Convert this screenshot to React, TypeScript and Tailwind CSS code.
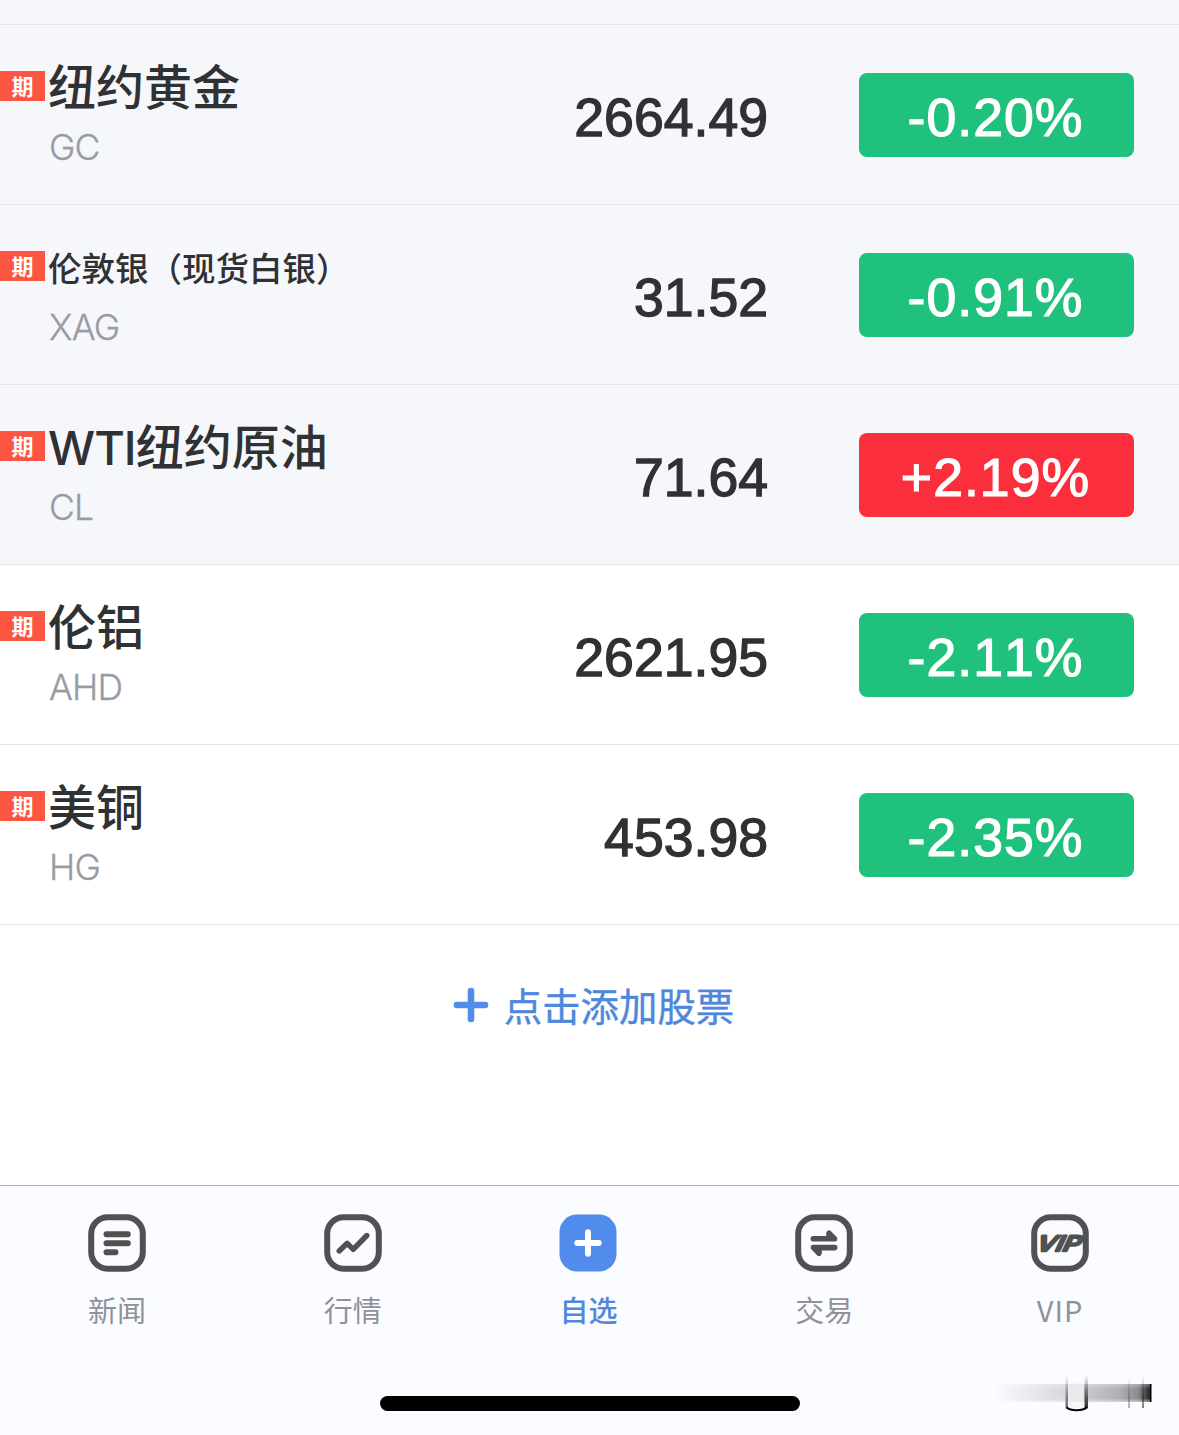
import type { ReactNode } from 'react';
import { clsx } from 'clsx';

type Quote = {
  name: string;
  prefix?: string;
  code: string;
  price: string;
  change: string;
  pinned?: boolean;
  compact?: boolean;
};

const quotes: Quote[] = [
  { name: '纽约黄金', code: 'GC', price: '2664.49', change: '-0.20%', pinned: true },
  { name: '伦敦银（现货白银）', code: 'XAG', price: '31.52', change: '-0.91%', pinned: true, compact: true },
  { prefix: 'WTI', name: '纽约原油', code: 'CL', price: '71.64', change: '+2.19%', pinned: true },
  { name: '伦铝', code: 'AHD', price: '2621.95', change: '-2.11%' },
  { name: '美铜', code: 'HG', price: '453.98', change: '-2.35%' },
];

function QuoteRow({ name, prefix, code, price, change, pinned, compact }: Quote) {
  const up = change.startsWith('+');
  return (
    <li className={clsx('flex h-[180px] border-b border-[#e3e5e9]', pinned ? 'bg-[#f5f7fb]' : 'bg-white')}>
      <span className="mt-[46px] flex h-[30px] w-[45px] items-center justify-center bg-[#fc5642] pt-0.5 text-[22px] leading-none font-bold text-white">
        期
      </span>
      <div className="ml-[3px] w-[400px] pt-[27px]">
        <div
          className={clsx(
            'flex h-[72px] items-center font-medium whitespace-nowrap text-[#303133]',
            compact ? 'pt-0.5 text-[33.5px]' : 'text-[48px]',
          )}
        >
          {prefix && <span className="text-[47px] tracking-[-1px]">{prefix}</span>}
          {name}
        </div>
        <div className="mt-0.5 ml-px text-[35.5px] leading-[44px] font-light tracking-[-0.8px] text-[#989ba5] [-webkit-text-stroke:0.3px_#989ba5]">
          {code}
        </div>
      </div>
      <div className="flex flex-1 items-center justify-end pt-[5px] pr-[91px] font-['Liberation_Sans',sans-serif] text-[53.6px] text-[#303133] [font-kerning:none] [-webkit-text-stroke:1.3px_#303133]">
        {price}
      </div>
      <div
        className={clsx(
          "mt-12 mr-[45px] flex h-[84px] w-[275px] items-center justify-center rounded-lg pt-1 pr-0.5 font-['Liberation_Sans',sans-serif] text-[53.6px] tracking-[1px] text-white [font-kerning:none] [-webkit-text-stroke:1.2px_white]",
          up ? 'bg-[#fb2f3b]' : 'bg-[#1fc17d]',
        )}
      >
        {change}
      </div>
    </li>
  );
}

/** Rounded frame shared by the inactive tab icons */
function TabIcon({ children }: { children: ReactNode }) {
  return (
    <svg
      viewBox="0 0 58 58"
      className="size-[58px] overflow-visible"
      fill="none"
      stroke="#505152"
      strokeLinecap="round"
      strokeLinejoin="round"
    >
      <rect x="3.2" y="3.2" width="51.6" height="51.6" rx="16.5" strokeWidth="6" />
      {children}
    </svg>
  );
}

const tabs = [
  {
    label: '新闻',
    icon: (
      <TabIcon>
        <path d="M18.5 20.3h21.3M18.5 29.3h21.3M18.5 38.3h9" strokeWidth="6" />
      </TabIcon>
    ),
  },
  {
    label: '行情',
    icon: (
      <TabIcon>
        <path d="M15.2 37l8-7.7 6 6L42.8 21.5" strokeWidth="5.4" />
      </TabIcon>
    ),
  },
  {
    label: '自选',
    active: true,
    icon: (
      <svg viewBox="0 0 58 58" className="size-[58px]">
        <rect x="0.5" y="0.5" width="57" height="57" rx="17.5" fill="#518bec" />
        <path d="M29 18.3v21.4M18.3 29h21.4" stroke="white" strokeWidth="6" strokeLinecap="round" />
      </svg>
    ),
  },
  {
    label: '交易',
    icon: (
      <TabIcon>
        <path d="M18.3 24.8h21.2L34 19.2v5.6M39.7 33.6H18.5l5.5 5.6v-5.6" strokeWidth="5.6" />
      </TabIcon>
    ),
  },
  {
    label: 'VIP',
    icon: (
      <TabIcon>
        <text
          x="4"
          y="37.5"
          textLength="44"
          lengthAdjust="spacingAndGlyphs"
          transform="translate(17 0) skewX(-25)"
          fill="#505152"
          strokeWidth="2.4"
          className="font-['Inter',sans-serif] text-[21px] font-medium"
        >
          VIP
        </text>
      </TabIcon>
    ),
  },
];

/** Smudged strip in the bottom corner */
function Smudge() {
  return (
    <svg viewBox="0 0 170 42" className="absolute top-[1373px] left-[985px] h-[42px] w-[170px]">
      <defs>
        <linearGradient id="strip">
          <stop offset="0" stopColor="#000" stopOpacity="0" />
          <stop offset="0.45" stopColor="#000" stopOpacity="0.14" />
          <stop offset="0.8" stopColor="#000" stopOpacity="0.3" />
          <stop offset="0.92" stopColor="#000" stopOpacity="0.45" />
          <stop offset="1" stopColor="#000" stopOpacity="0.9" />
        </linearGradient>
        <linearGradient id="post" x1="0" y1="0" x2="0" y2="1">
          <stop offset="0" stopColor="#000" stopOpacity="0" />
          <stop offset="0.6" stopColor="#000" stopOpacity="0.5" />
          <stop offset="1" stopColor="#000" stopOpacity="0.85" />
        </linearGradient>
        <linearGradient id="fade" x1="0" y1="0" x2="0" y2="1">
          <stop offset="0" stopColor="#fbfcff" stopOpacity="0.3" />
          <stop offset="0.3" stopColor="#fbfcff" stopOpacity="0" />
          <stop offset="0.8" stopColor="#fbfcff" stopOpacity="0" />
          <stop offset="1" stopColor="#fbfcff" stopOpacity="0.5" />
        </linearGradient>
      </defs>
      <rect x="8" y="11" width="158" height="18" fill="url(#strip)" />
      <rect x="8" y="11" width="158" height="18" fill="url(#fade)" />
      <rect x="83" y="9" width="16" height="26" fill="#f6f7f9" />
      <rect x="83" y="11" width="16" height="18" fill="#e9eaec" />
      <rect x="80.5" y="2" width="2.5" height="33" fill="url(#post)" opacity="0.7" />
      <rect x="99.5" y="2" width="3.5" height="33" fill="url(#post)" />
      <path d="M81.5 34.5q3 2.7 10 2.7t10.5-2.7" fill="none" stroke="#000" strokeWidth="2" />
      <rect x="143" y="4" width="2" height="31" fill="url(#post)" opacity="0.35" />
      <rect x="157" y="2" width="2" height="33" fill="url(#post)" opacity="0.6" />
      <rect x="165" y="11" width="1.5" height="18" fill="#000" />
    </svg>
  );
}

export default function App() {
  return (
    <main className="relative flex h-[1435px] w-[1179px] flex-col overflow-hidden bg-white font-['Inter','Noto_Sans_CJK_SC',sans-serif]">
      <div className="h-[25px] shrink-0 border-b border-[#e3e5e9] bg-[#f5f7fb]" />
      <ul>
        {quotes.map((quote) => (
          <QuoteRow key={quote.code} {...quote} />
        ))}
      </ul>

      <button className="flex h-[160px] items-center justify-center gap-[15px] pl-2 text-[38.4px] text-[#4f87db]">
        <svg viewBox="0 0 36 36" className="size-9">
          <path d="M18 4v28M4 18h28" stroke="#518bec" strokeWidth="6.6" strokeLinecap="round" />
        </svg>
        <span className="pt-[5px] [-webkit-text-stroke:0.4px_#4f87db]">点击添加股票</span>
      </button>

      <nav className="mt-auto h-[250px] border-t border-[#aeaeb2] bg-[#fbfcff]">
        <div className="mr-px -ml-px grid grid-cols-5 pt-7">
          {tabs.map((tab) => (
            <div key={tab.label} className="flex flex-col items-center">
              {tab.icon}
              <span
                className={clsx(
                  "mt-[15px] font-['Noto_Sans_CJK_SC',sans-serif] text-[29px] leading-[44px]",
                  tab.active ? 'font-medium text-[#5288dc]' : 'text-[#8f929b]',
                  tab.label === 'VIP' && 'tracking-[1px]',
                )}
              >
                {tab.label}
              </span>
            </div>
          ))}
        </div>
        <div className="mx-auto mt-[65px] h-[15px] w-[420px] rounded-full bg-black" />
      </nav>
      <Smudge />
    </main>
  );
}
